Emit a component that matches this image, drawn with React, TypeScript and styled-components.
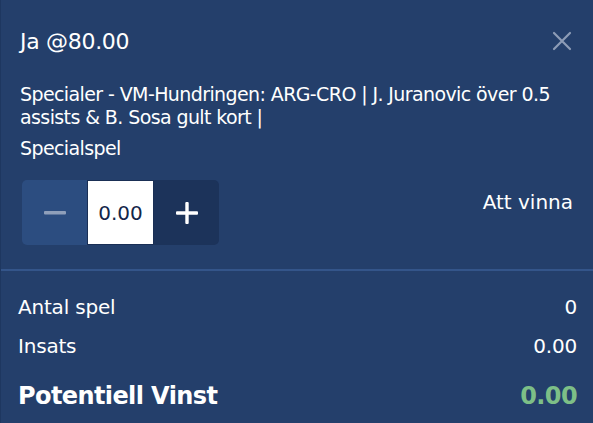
import React from "react";
import styled, { createGlobalStyle } from "styled-components";

const Global = createGlobalStyle`
  html, body { margin: 0; padding: 0; background: #243f6b; }
  body { font-family: "DejaVu Sans", "Liberation Sans", sans-serif; color: #fff; }
  * { box-sizing: border-box; }
`;

const Panel = styled.div`
  width: 593px;
  height: 423px;
  background: #243f6b;
  border-left: 1px solid #1e3760;
  display: flex;
  flex-direction: column;
  overflow: hidden;
`;

const Top = styled.section`
  padding: 27px 20px 0 19px;
  height: 269px;
`;

const Header = styled.div`
  display: flex;
  justify-content: space-between;
  align-items: center;
  height: 28px;
`;

const Title = styled.h1`
  margin: 0;
  font-size: 22px;
  font-weight: normal;
  letter-spacing: -0.3px;
`;

const Close = styled.button`
  background: none;
  border: 0;
  padding: 0;
  width: 22px;
  height: 22px;
  display: flex;
  align-items: center;
  justify-content: center;
  cursor: pointer;
`;

const Desc = styled.p`
  margin: 28px 0 0;
  font-size: 19px;
  line-height: 23px;
  letter-spacing: -0.6px;
`;

const Sub = styled.p`
  margin: 8px 0 0;
  font-size: 19px;
  line-height: 23px;
  letter-spacing: -0.6px;
`;

const StakeRow = styled.div`
  margin-top: 20px;
  display: flex;
  justify-content: space-between;
  align-items: flex-start;
`;

const Stepper = styled.div`
  display: flex;
  height: 65px;
  border-radius: 5px;
  overflow: hidden;
  margin-left: 2px;
`;

const StepBtn = styled.button<{ $dark?: boolean }>`
  width: 65px;
  border: 0;
  padding: 0;
  background: ${(p) => (p.$dark ? "#1c335a" : "#2c4d80")};
  display: flex;
  align-items: center;
  justify-content: center;
`;

const Input = styled.div`
  width: 67px;
  background: #fff;
  border: 1px solid #1a2f55;
  color: #13264a;
  font-size: 20px;
  display: flex;
  align-items: center;
  justify-content: center;
`;

const ToWin = styled.div`
  font-size: 20px;
  margin-top: 10px;
`;

const Divider = styled.hr`
  margin: 0;
  border: 0;
  height: 2px;
  background: #34558a;
`;

const Summary = styled.section`
  padding: 16px 16px 0 17px;
  display: flex;
  flex-direction: column;
`;

const Row = styled.div<{ $big?: boolean }>`
  display: flex;
  justify-content: space-between;
  align-items: center;
  height: ${(p) => (p.$big ? "46px" : "39px")};
  margin-top: ${(p) => (p.$big ? "8px" : "0")};
  font-size: ${(p) => (p.$big ? "24px" : "20px")};
  font-weight: ${(p) => (p.$big ? "bold" : "normal")};
  letter-spacing: ${(p) => (p.$big ? "-0.6px" : "-0.2px")};
`;

const Value = styled.span<{ $green?: boolean }>`
  color: ${(p) => (p.$green ? "#7dbf87" : "#fff")};
`;

export default function App() {
  return (
    <>
      <Global />
      <Panel>
        <Top>
          <Header>
            <Title>Ja @80.00</Title>
            <Close aria-label="Stäng">
              <svg width="20" height="20" viewBox="0 0 20 20">
                <path d="M2 2 L18 18 M18 2 L2 18" stroke="#8d9cb6" strokeWidth="2.2" strokeLinecap="round" />
              </svg>
            </Close>
          </Header>
          <Desc>
            Specialer - VM-Hundringen: ARG-CRO | J. Juranovic över 0.5 assists &amp; B. Sosa gult kort |
          </Desc>
          <Sub>Specialspel</Sub>
          <StakeRow>
            <Stepper>
              <StepBtn aria-label="Minska">
                <svg width="22" height="4" viewBox="0 0 22 4">
                  <rect width="22" height="3.4" rx="1" fill="#8f9fba" />
                </svg>
              </StepBtn>
              <Input>0.00</Input>
              <StepBtn $dark aria-label="Öka">
                <svg width="22" height="22" viewBox="0 0 22 22">
                  <rect x="9.3" y="0" width="3.4" height="22" rx="1" fill="#fff" />
                  <rect x="0" y="9.3" width="22" height="3.4" rx="1" fill="#fff" />
                </svg>
              </StepBtn>
            </Stepper>
            <ToWin>Att vinna</ToWin>
          </StakeRow>
        </Top>
        <Divider />
        <Summary>
          <Row>
            <span>Antal spel</span>
            <Value>0</Value>
          </Row>
          <Row>
            <span>Insats</span>
            <Value>0.00</Value>
          </Row>
          <Row $big>
            <span>Potentiell Vinst</span>
            <Value $green>0.00</Value>
          </Row>
        </Summary>
      </Panel>
    </>
  );
}
